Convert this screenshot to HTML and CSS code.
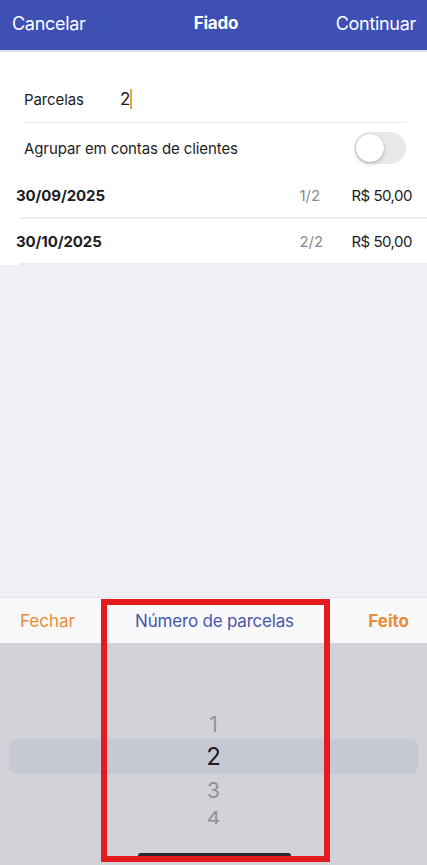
FILE: index.html
```html
<!DOCTYPE html>
<html lang="pt-BR">
<head>
    <meta charset="utf-8">
    <title>Fiado</title>
    <meta name="viewport" content="width=device-width, initial-scale=1">
    <link rel="stylesheet" href="styles.css">
</head>
<body>
<div class="screen">
    <div class="navbar">
        <span class="nav-btn">Cancelar</span>
        <span class="nav-title">Fiado</span>
        <span class="nav-btn nav-right">Continuar</span>
    </div>

    <div class="form">
        <div class="cell cell-input">
            <span class="label">Parcelas</span>
            <span class="value">2<span class="caret"></span></span>
        </div>
        <div class="cell cell-switch">
            <span class="label">Agrupar em contas de clientes</span>
            <span class="switch"><span class="knob"></span></span>
        </div>
        <div class="row">
            <span class="date">30/09/2025</span>
            <span class="part">1/2</span>
            <span class="amount">R$ 50,00</span>
        </div>
        <div class="row">
            <span class="date">30/10/2025</span>
            <span class="part">2/2</span>
            <span class="amount">R$ 50,00</span>
        </div>
    </div>

    <div class="spacer"></div>

    <div class="toolbar">
        <span class="tool-btn">Fechar</span>
        <span class="tool-title">Número de parcelas</span>
        <span class="tool-btn tool-done">Feito</span>
    </div>
    <div class="picker">
        <div class="pick pick-1">1</div>
        <div class="pick pick-sel">2</div>
        <div class="pick pick-3">3</div>
        <div class="pick pick-4">4</div>
    </div>

    <div class="home-bar"></div>
    <div class="highlight"></div>
</div>
</body>
</html>
```

FILE: styles.css
```css
html, body {
    margin: 0;
    padding: 0;
}
body {
    font-family: Inter, "Noto Sans", sans-serif;
    background-color: #efeff4;
    color: #1c1c1e;
}
.screen {
    position: relative;
    width: 427px;
    height: 865px;
    display: flex;
    flex-direction: column;
    overflow: hidden;
}

/* top bar */
.navbar {
    height: 46px;
    background-color: #3e50b4;
    border-bottom: 2px solid #dfe2f3;
    display: grid;
    grid-template-columns: 1fr auto 1fr;
    align-items: center;
    padding: 0 11px 4px 12px;
}
.nav-btn {
    color: #ffffff;
    font-size: 18px;
    letter-spacing: -0.3px;
}
.nav-right {
    text-align: right;
}
.nav-title {
    color: #ffffff;
    font-size: 17px;
    font-weight: 700;
    letter-spacing: -0.2px;
    margin-left: 4px;
}

/* form */
.form {
    background-color: #ffffff;
    padding-top: 24px;
}
.cell {
    margin: 0 21px 0 24px;
    display: flex;
    align-items: center;
    font-size: 15px;
    letter-spacing: -0.1px;
}
.cell-input {
    height: 46px;
    border-bottom: 1px solid #ececf0;
}
.cell-input .label {
    width: 96px;
}
.value {
    font-size: 17px;
    display: inline-flex;
    align-items: center;
}
.caret {
    display: inline-block;
    width: 2px;
    height: 20px;
    background-color: #f0a13c;
}
.cell-switch {
    height: 50px;
    justify-content: space-between;
}
.switch {
    width: 52px;
    height: 32px;
    border-radius: 16px;
    background-color: #e9e9eb;
    display: flex;
    align-items: center;
    padding: 0 2px;
    box-sizing: border-box;
}
.knob {
    width: 28px;
    height: 28px;
    border-radius: 50%;
    background-color: #ffffff;
    box-shadow: 0 2px 4px rgba(0, 0, 0, 0.2), 0 0 1px rgba(0, 0, 0, 0.25);
}
.row {
    height: 44px;
    display: flex;
    align-items: center;
    margin-left: 20px;
    padding-right: 15px;
    border-bottom: 2px solid #ececf1;
    font-size: 15px;
}
.date {
    font-weight: 700;
    flex: 1;
    margin-left: -4px;
    letter-spacing: -0.1px;
}
.part {
    color: #8b8b90;
    width: 52px;
}
.amount {
    letter-spacing: -0.5px;
}

.spacer {
    flex: 1;
}

/* picker */
.toolbar {
    height: 45px;
    background-color: #f9f9fb;
    border-top: 1px solid #e4e4e8;
    display: grid;
    grid-template-columns: 1fr auto 1fr;
    align-items: center;
    padding: 0 18px 0 20px;
}
.tool-btn {
    color: #e98b35;
    font-size: 17px;
}
.tool-done {
    font-weight: 700;
    text-align: right;
}
.tool-title {
    color: #4656ad;
    font-size: 17px;
    letter-spacing: -0.2px;
}
.picker {
    height: 222px;
    background-color: #d2d3d8;
    padding-top: 66px;
    box-sizing: border-box;
    display: flex;
    flex-direction: column;
}
.pick {
    text-align: center;
    color: #8f9096;
    font-size: 21px;
    height: 32px;
    line-height: 32px;
    margin: 0 9px;
}
.pick-1 {
    height: 30px;
}
.pick-sel {
    height: 35px;
    line-height: 35px;
    background-color: #c6c9d1;
    border-radius: 8px;
    color: #1c1c1e;
    font-size: 24px;
}
.pick-3 {
    height: 32px;
    line-height: 33px;
}
.pick-4 {
    height: 24px;
    line-height: 24px;
    transform: scaleY(0.8);
}

/* overlays */
.home-bar {
    position: absolute;
    left: 138px;
    top: 853px;
    width: 153px;
    height: 5px;
    border-radius: 3px;
    background-color: #2b2b2e;
}
.highlight {
    position: absolute;
    left: 101px;
    top: 599px;
    width: 229px;
    height: 263px;
    border: 6px solid #e41c1f;
    box-sizing: border-box;
}
```
